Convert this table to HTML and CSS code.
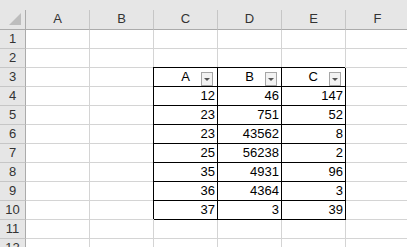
FILE: index.html
```html
<!DOCTYPE html>
<html>
<head>
<meta charset="utf-8">
<link rel="stylesheet" href="styles.css">
</head>
<body>
<div class="band"></div>
<div class="sheet">
  <div class="hd corner"><svg width="13" height="13" viewBox="0 0 13 13"><polygon points="12,0 12,12 0,12" fill="#bdbdbd"/></svg></div>
  <div class="hd col">A</div><div class="hd col">B</div><div class="hd col">C</div><div class="hd col">D</div><div class="hd col">E</div><div class="hd col">F</div>

  <div class="hd row">1</div><div class="c"></div><div class="c"></div><div class="c"></div><div class="c"></div><div class="c"></div><div class="c"></div>
  <div class="hd row">2</div><div class="c"></div><div class="c"></div><div class="c"></div><div class="c"></div><div class="c"></div><div class="c"></div>

  <div class="hd row">3</div><div class="c"></div><div class="c"></div>
  <div class="c t th"><span>A</span><span class="dd"></span></div>
  <div class="c t th"><span>B</span><span class="dd"></span></div>
  <div class="c t th"><span>C</span><span class="dd"></span></div>
  <div class="c"></div>

  <div class="hd row">4</div><div class="c"></div><div class="c"></div><div class="c t">12</div><div class="c t">46</div><div class="c t">147</div><div class="c"></div>
  <div class="hd row">5</div><div class="c"></div><div class="c"></div><div class="c t">23</div><div class="c t">751</div><div class="c t">52</div><div class="c"></div>
  <div class="hd row">6</div><div class="c"></div><div class="c"></div><div class="c t">23</div><div class="c t">43562</div><div class="c t">8</div><div class="c"></div>
  <div class="hd row">7</div><div class="c"></div><div class="c"></div><div class="c t">25</div><div class="c t">56238</div><div class="c t">2</div><div class="c"></div>
  <div class="hd row">8</div><div class="c"></div><div class="c"></div><div class="c t">35</div><div class="c t">4931</div><div class="c t">96</div><div class="c"></div>
  <div class="hd row">9</div><div class="c"></div><div class="c"></div><div class="c t">36</div><div class="c t">4364</div><div class="c t">3</div><div class="c"></div>
  <div class="hd row">10</div><div class="c"></div><div class="c"></div><div class="c t">37</div><div class="c t">3</div><div class="c t">39</div><div class="c"></div>

  <div class="hd row">11</div><div class="c"></div><div class="c"></div><div class="c"></div><div class="c"></div><div class="c"></div><div class="c"></div>
  <div class="hd row">12</div><div class="c"></div><div class="c"></div><div class="c"></div><div class="c"></div><div class="c"></div><div class="c"></div>
</div>
</body>
</html>
```
FILE: styles.css
```css
html, body {
  margin: 0;
  padding: 0;
  background: #ffffff;
  overflow: hidden;
}

body {
  width: 407px;
  height: 247px;
  font-family: "Liberation Sans", Arial, sans-serif;
  font-size: 13px;
  color: #000;
}

/* strip above the column headers */
.band {
  height: 10px;
  background: #e6e6e6;
}

.sheet {
  display: grid;
  grid-template-columns: 26px repeat(6, 64px);
  grid-template-rows: 20px;
  grid-auto-rows: 19px;
}

.sheet > div {
  box-sizing: border-box;
  border-right: 1px solid #d4d4d4;
  border-bottom: 1px solid #d4d4d4;
  line-height: 18px;
  white-space: nowrap;
}

/* headers */
.sheet > .hd {
  background: #e6e6e6;
  color: #333;
  text-align: center;
  border-right-color: #c6c6c6;
  border-bottom-color: #c6c6c6;
}

.sheet > .col {
  border-bottom-color: #ababab;
}

.sheet > .row {
  border-right-color: #ababab;
}

.sheet > .corner {
  border-right-color: #ababab;
  border-bottom-color: #ababab;
  display: flex;
  align-items: flex-end;
  justify-content: flex-end;
  padding: 0 3px 3px 0;
}

.corner svg {
  display: block;
}

/* data cells */
.c {
  text-align: right;
  padding-right: 2px;
}

/* bordered table */
.sheet > .t {
  border-right-color: #000;
  border-bottom-color: #000;
  box-shadow: -1px -1px 0 #000;
}

.sheet > .th {
  display: flex;
  justify-content: flex-end;
  align-items: flex-end;
  gap: 11px;
  padding-right: 4px;
}

/* filter dropdown button */
.dd {
  box-sizing: border-box;
  width: 12px;
  height: 14px;
  border: 1px solid #a6a6a6;
  background: #f2f2f2;
  display: flex;
  align-items: center;
  justify-content: center;
}

.dd::after {
  content: "";
  width: 0;
  height: 0;
  border-left: 3px solid transparent;
  border-right: 3px solid transparent;
  border-top: 3px solid #555;
}
```
